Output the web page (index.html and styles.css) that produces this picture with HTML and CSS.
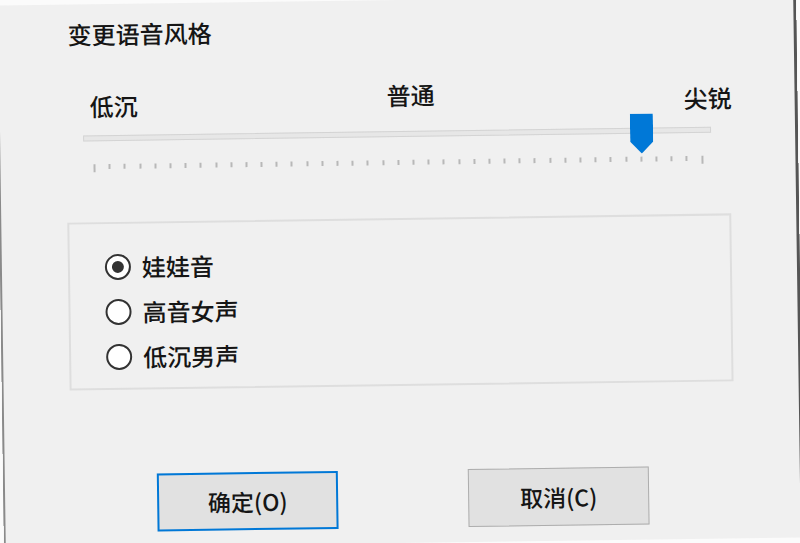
FILE: index.html
```html
<!DOCTYPE html>
<html lang="zh-CN">
<head>
    <meta charset="UTF-8">
    <title>变更语音风格</title>
    <link rel="stylesheet" href="styles.css">
</head>
<body>
    <div class="dialog">
        <h1 class="title">变更语音风格</h1>

        <div class="scale-labels">
            <span class="low">低沉</span>
            <span class="mid">普通</span>
            <span class="high">尖锐</span>
        </div>

        <div class="slider">
            <div class="track"></div>
            <svg class="thumb" width="23" height="40" viewBox="0 0 23 40">
                <path d="M0 0 H23 V28 L11.5 40 L0 28 Z" fill="#0078d7"/>
            </svg>
        </div>

        <div class="ticks">
            <span class="end"></span>
            <span></span><span></span><span></span><span></span><span></span>
            <span></span><span></span><span></span><span></span><span></span>
            <span></span><span></span><span></span><span></span><span></span>
            <span></span><span></span><span></span><span></span><span></span>
            <span></span><span></span><span></span><span></span><span></span>
            <span></span><span></span><span></span><span></span><span></span>
            <span></span><span></span><span></span><span></span><span></span>
            <span></span><span></span><span></span><span></span>
            <span class="end"></span>
        </div>

        <div class="group">
            <label class="option"><span class="radio on"></span>娃娃音</label>
            <label class="option"><span class="radio"></span>高音女声</label>
            <label class="option"><span class="radio"></span>低沉男声</label>
        </div>

        <div class="buttons">
            <button class="btn default">确定(O)</button>
            <button class="btn">取消(C)</button>
        </div>
    </div>
</body>
</html>
```

FILE: styles.css
```css
body {
    margin: 0;
    background: #fbfbfb;
    font-family: "Noto Sans CJK SC", "Noto Sans", sans-serif;
    color: #151515;
    overflow: hidden;
}
.dialog {
    width: 800px;
    height: 543px;
    box-sizing: border-box;
    background: #f0f0f0;
    box-shadow: inset 2px 0 #8a8a8a, inset -3px 0 #555;
    transform: rotate(-0.8deg);
    overflow: hidden;
}
.title {
    margin: 15px 0 0 71px;
    font-size: 24px;
    line-height: 30px;
    font-weight: 500;
}
.scale-labels {
    display: flex;
    justify-content: space-between;
    align-items: flex-start;
    width: 642px;
    margin: 35px 0 0 92px;
    font-size: 24px;
    line-height: 30px;
    font-weight: 500;
}
.low, .high {
    margin-top: 7px;
}
.slider {
    position: relative;
    width: 628px;
    height: 40px;
    margin-left: 85px;
    padding-top: 14px;
    box-sizing: border-box;
}
.track {
    height: 6px;
    background: #e7e7e7;
    border: 1px solid #d4d4d4;
    box-sizing: border-box;
}
.thumb {
    position: absolute;
    left: 547px;
    top: 0;
}
.ticks {
    display: flex;
    justify-content: space-between;
    align-items: flex-start;
    width: 610px;
    height: 8px;
    margin: 3px 0 0 95px;
}
.ticks span {
    width: 2px;
    height: 5px;
    background: #b8b8b8;
}
.ticks span.end {
    height: 8px;
}
.group {
    width: 664px;
    height: 168px;
    margin: 50px 0 0 68px;
    padding-top: 20px;
    box-sizing: border-box;
    border: 2px solid #dedede;
}
.option {
    display: flex;
    align-items: center;
    height: 45px;
    padding-left: 35px;
    font-size: 24px;
    font-weight: 500;
}
.radio {
    display: flex;
    align-items: center;
    justify-content: center;
    width: 26px;
    height: 26px;
    margin-right: 11px;
    box-sizing: border-box;
    border: 2px solid #333;
    border-radius: 50%;
    background: #fff;
}
.radio.on::after {
    content: "";
    width: 12px;
    height: 12px;
    border-radius: 50%;
    background: #333;
}
.buttons {
    display: flex;
    gap: 130px;
    margin: 84px 0 0 154px;
}
.btn {
    width: 181px;
    height: 58px;
    padding: 0;
    box-sizing: border-box;
    background: #e1e1e1;
    border: 1px solid #adadad;
    font-family: "Noto Sans CJK SC", "Noto Sans", sans-serif;
    font-size: 23px;
    font-weight: 500;
    color: #151515;
}
.btn.default {
    border: 2px solid #0078d7;
}
```
